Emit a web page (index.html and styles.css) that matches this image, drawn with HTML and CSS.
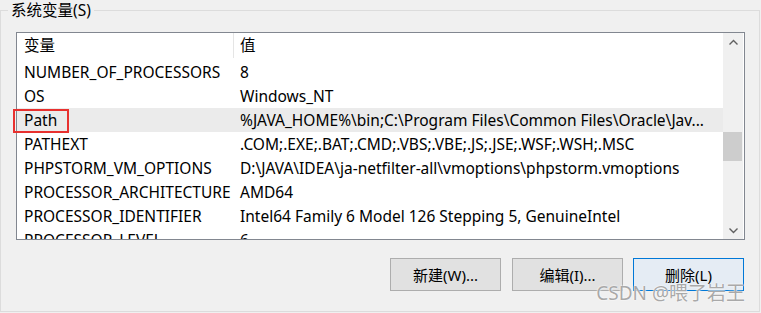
FILE: index.html
```html
<!DOCTYPE html>
<html lang="zh-CN">
<head>
    <meta charset="UTF-8">
    <meta name="viewport" content="width=device-width, initial-scale=1.0">
    <title>系统变量</title>
    <link rel="stylesheet" href="styles.css">
</head>
<body>
    <div class="group">
        <div class="group-title">系统变量(S)</div>

        <div class="list">
            <div class="table">
                <div class="row header">
                    <div class="cell name">变量</div>
                    <div class="cell value">值</div>
                </div>
                <div class="row">
                    <div class="cell name">NUMBER_OF_PROCESSORS</div>
                    <div class="cell value">8</div>
                </div>
                <div class="row">
                    <div class="cell name">OS</div>
                    <div class="cell value">Windows_NT</div>
                </div>
                <div class="row selected">
                    <div class="cell name">Path</div>
                    <div class="cell value">%JAVA_HOME%\bin;C:\Program Files\Common Files\Oracle\Jav...</div>
                </div>
                <div class="row">
                    <div class="cell name">PATHEXT</div>
                    <div class="cell value">.COM;.EXE;.BAT;.CMD;.VBS;.VBE;.JS;.JSE;.WSF;.WSH;.MSC</div>
                </div>
                <div class="row">
                    <div class="cell name">PHPSTORM_VM_OPTIONS</div>
                    <div class="cell value">D:\JAVA\IDEA\ja-netfilter-all\vmoptions\phpstorm.vmoptions</div>
                </div>
                <div class="row">
                    <div class="cell name">PROCESSOR_ARCHITECTURE</div>
                    <div class="cell value">AMD64</div>
                </div>
                <div class="row">
                    <div class="cell name">PROCESSOR_IDENTIFIER</div>
                    <div class="cell value">Intel64 Family 6 Model 126 Stepping 5, GenuineIntel</div>
                </div>
                <div class="row">
                    <div class="cell name">PROCESSOR_LEVEL</div>
                    <div class="cell value">6</div>
                </div>
            </div>

            <div class="scrollbar">
                <div class="arrow">
                    <svg width="9" height="6" viewBox="0 0 9 6"><path d="M0.5 5.5 L4.5 1.5 L8.5 5.5" fill="none" stroke="#606060" stroke-width="1.4"/></svg>
                </div>
                <div class="track">
                    <div class="thumb"></div>
                </div>
                <div class="arrow">
                    <svg width="9" height="6" viewBox="0 0 9 6"><path d="M0.5 0.5 L4.5 4.5 L8.5 0.5" fill="none" stroke="#606060" stroke-width="1.4"/></svg>
                </div>
            </div>

            <!-- red marker around the Path row -->
            <div class="marker"></div>
        </div>

        <div class="buttons">
            <button>新建(W)...</button>
            <button>编辑(I)...</button>
            <button class="default">删除(L)</button>
        </div>
    </div>

    <div class="watermark">CSDN @喂了岩王</div>
</body>
</html>
```

FILE: styles.css
```css
body {
    margin: 0;
    background: #f0f0f0;
    font-family: "Noto Sans", "Noto Sans CJK SC", sans-serif;
    font-size: 15.5px;
    color: #000;
    width: 761px;
    height: 313px;
    overflow: hidden;
    position: relative;
}
.group {
    margin-top: 10px;
    width: 760px;
    height: 302px;
    box-sizing: border-box;
    border: 1px solid #dcdcdc;
    padding: 0 14px 0 15px;
}
.group-title {
    width: fit-content;
    margin: -11px 0 0 -8px;
    padding: 0 3px;
    background: #f0f0f0;
    line-height: 20px;
    height: 20px;
}
.list {
    position: relative;
    display: flex;
    margin-top: 12px;
    height: 208px;
    box-sizing: border-box;
    border: 1px solid #828790;
    background: #fff;
}
.table {
    flex: 1;
    overflow: hidden;
}
.row {
    display: flex;
    height: 24px;
    line-height: 24px;
    white-space: nowrap;
}
.row.header {
    height: 27px;
    line-height: 25px;
}
.row.selected {
    background: #ebebeb;
}
.cell {
    overflow: hidden;
}
.cell.name {
    width: 217px;
    flex: none;
    padding-left: 7px;
    box-sizing: border-box;
}
.cell.value {
    flex: 1;
    padding-left: 6px;
}
.header .cell.name {
    border-right: 1px solid #e5e5e5;
    height: 25px;
}
.scrollbar {
    width: 20px;
    flex: none;
    display: flex;
    flex-direction: column;
    background: #f0f0f0;
    margin-right: 1px;
}
.arrow {
    height: 17px;
    display: flex;
    align-items: center;
    justify-content: center;
}
.track {
    flex: 1;
}
.thumb {
    margin: 82px 1px 0 0;
    height: 29px;
    background: #cdcdcd;
}
.marker {
    position: absolute;
    left: -4px;
    top: 76px;
    width: 56px;
    height: 24px;
    box-sizing: border-box;
    border: 2px solid #e8312f;
}
.buttons {
    display: flex;
    justify-content: flex-end;
    gap: 11px;
    margin-top: 18px;
    margin-right: 1px;
}
button {
    width: 111px;
    height: 33px;
    background: #e1e1e1;
    border: 1px solid #adadad;
    font-family: "Noto Sans", "Noto Sans CJK SC", sans-serif;
    font-size: 15px;
    color: #000;
    padding: 0;
}
button.default {
    margin-left: -1px;
    border-color: #0078d7;
    background: #e5ecf4;
}
.watermark {
    position: absolute;
    right: 16px;
    bottom: 7px;
    font-size: 19px;
    color: #a9a9a9;
    text-shadow: 0 0 2px #fff, 0 0 1px #fff;
    white-space: nowrap;
}
```
